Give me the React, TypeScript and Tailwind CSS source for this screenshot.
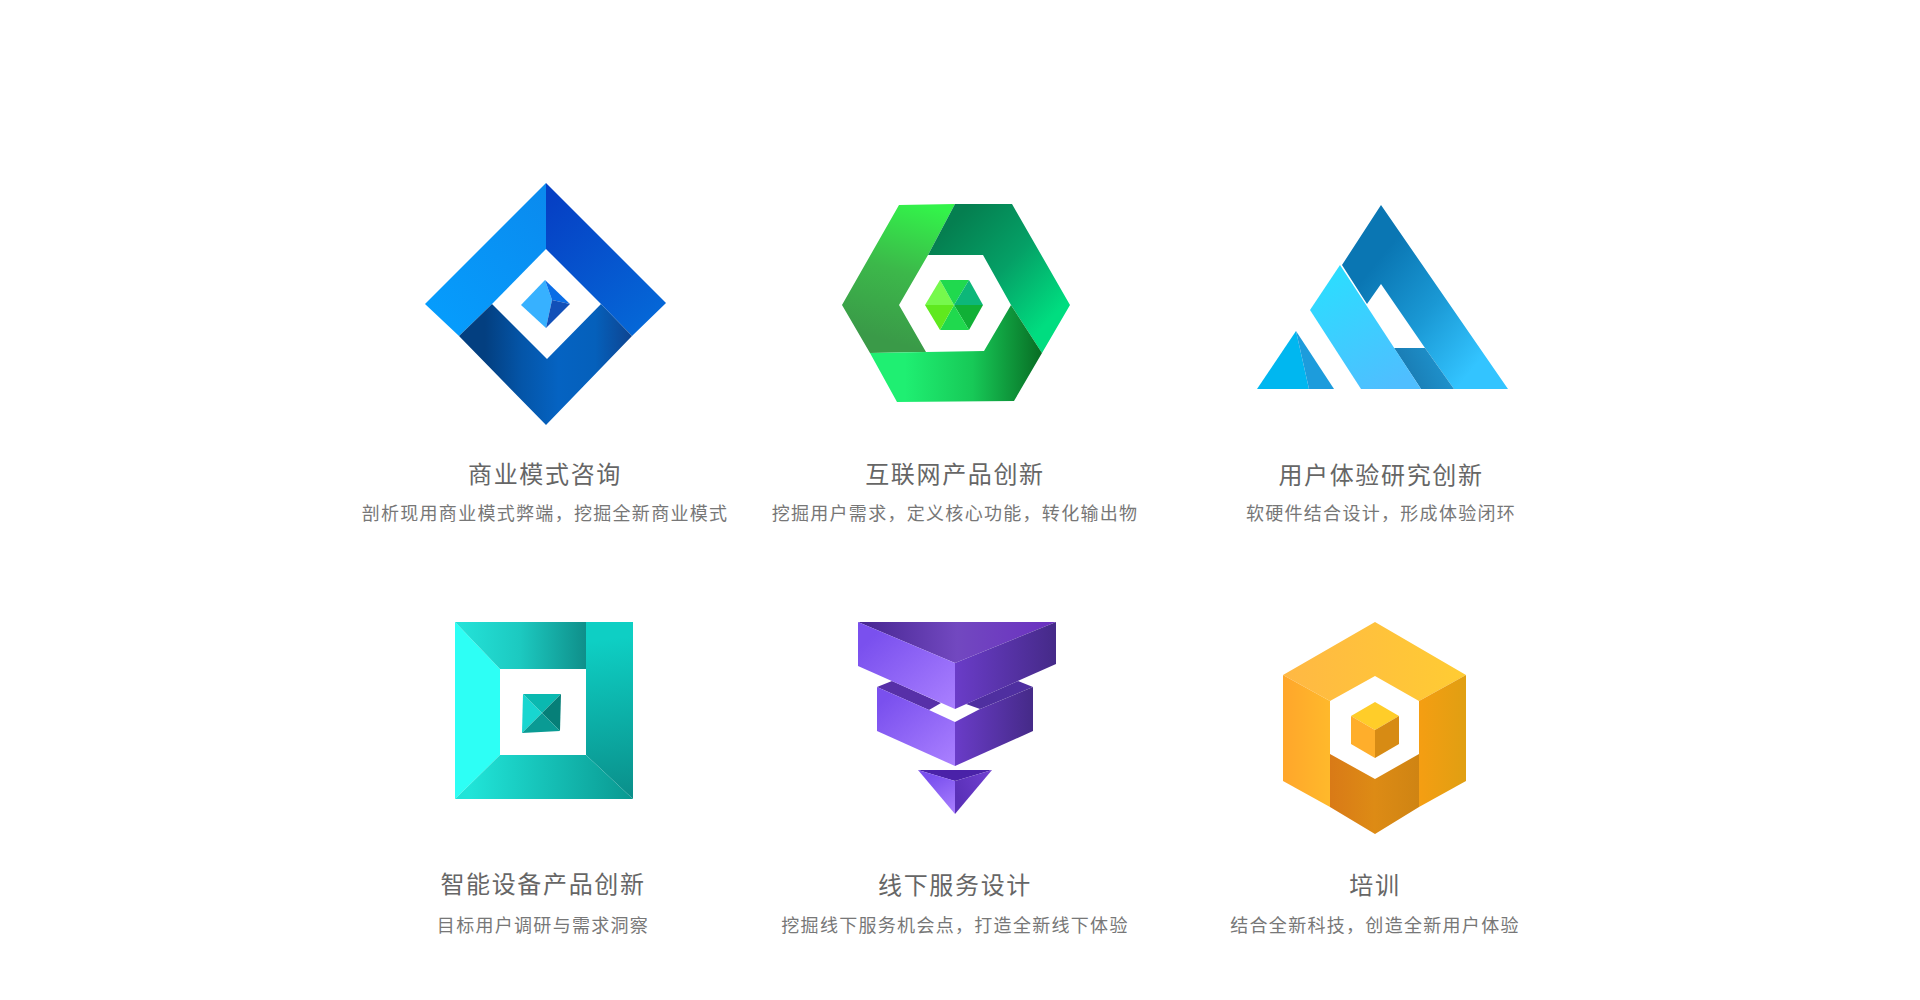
import type { ReactNode } from "react";

const FONT = "font-['Noto_Sans_CJK_SC','Noto_Sans',sans-serif]";

function Grad({ id, x1, y1, x2, y2, stops }: { id: string; x1: number; y1: number; x2: number; y2: number; stops: string[] }) {
  return (
    <linearGradient id={id} gradientUnits="userSpaceOnUse" x1={x1} y1={y1} x2={x2} y2={y2}>
      {stops.map((c, i) => (
        <stop key={i} offset={stops.length === 1 ? 0 : i / (stops.length - 1)} stopColor={c} />
      ))}
    </linearGradient>
  );
}

function DiamondLogo() {
  return (
    <>
      <defs>
        <Grad id="d1" x1={440} y1={320} x2={560} y2={200} stops={["#069cfc", "#0a8aee"]} />
        <Grad id="d2" x1={550} y1={200} x2={650} y2={330} stops={["#0640c4", "#0569d8"]} />
        <Grad id="d3" x1={485} y1={380} x2={632} y2={380} stops={["#033f80", "#0455a8", "#0563c2", "#0560bb", "#0e4490"]} />
      </defs>
      <polygon points="546,183 425,304 459,336 492,304 546,249" fill="url(#d1)" />
      <polygon points="546,183 666,303 632,336 601,304 546,249" fill="url(#d2)" />
      <polygon points="459,336 492,304 547,359 601,304 632,336 546,425" fill="url(#d3)" />
      <polygon points="545,280 521,305 546,328 552,300" fill="#37b1ff" />
      <polygon points="545,280 570,304 552,300" fill="#0a6de6" />
      <polygon points="552,300 570,304 546,328" fill="#1250b8" />
    </>
  );
}

function HexLogo() {
  return (
    <>
      <defs>
        <Grad id="h1" x1={925} y1={205} x2={885} y2={340} stops={["#33f34a", "#3cb84a", "#3a9a48"]} />
        <Grad id="h2" x1={950} y1={225} x2={1050} y2={320} stops={["#057f50", "#05a066", "#00dd80"]} />
        <Grad id="h3" x1={905} y1={380} x2={1040} y2={380} stops={["#1fef72", "#17c957", "#086f25"]} />
      </defs>
      <polygon points="899,205 955,204 928,255 899,305 926,352 870,353 842,305" fill="url(#h1)" />
      <polygon points="955,204 1012,204 1070,305 1042,353 1011,305 983,255 928,255" fill="url(#h2)" />
      <polygon points="870,353 926,352 984,351 1011,305 1042,353 1014,401 897,402" fill="url(#h3)" />
      <polygon points="925,305 940,280 954,305" fill="#76f94c" />
      <polygon points="940,280 969,280 954,305" fill="#20d94e" />
      <polygon points="969,280 983,305 954,305" fill="#0db779" />
      <polygon points="983,305 969,330 954,305" fill="#10b036" />
      <polygon points="969,330 940,330 954,305" fill="#20d94e" />
      <polygon points="940,330 925,305 954,305" fill="#5fe91e" />
    </>
  );
}

function TriangleLogo() {
  return (
    <>
      <defs>
        <Grad id="t1" x1={1370} y1={270} x2={1480} y2={360} stops={["#0a76b3", "#1a98d4", "#33c4ff"]} />
        <Grad id="t2" x1={1335} y1={275} x2={1395} y2={385} stops={["#2ddcff", "#4fbeff"]} />
        <Grad id="t3" x1={1395} y1={375} x2={1450} y2={350} stops={["#1877ae", "#2098d3"]} />
      </defs>
      <polygon points="1381,205 1342,265 1367,304 1381,284 1425,348 1454,389 1508,389" fill="url(#t1)" />
      <polygon points="1394,348 1425,348 1454,389 1421,389" fill="url(#t3)" />
      <polygon points="1340,265 1310,310 1361,389 1421,389" fill="url(#t2)" />
      <polygon points="1296,331 1257,389 1309,389" fill="#00b7f0" />
      <polygon points="1296,331 1309,389 1334,389" fill="#1d9cdc" />
    </>
  );
}

function SquareLogo() {
  return (
    <>
      <defs>
        <Grad id="s1" x1={455} y1={640} x2={586} y2={640} stops={["#24e4da", "#1cc9c0", "#0f8f8a"]} />
        <Grad id="s2" x1={600} y1={640} x2={620} y2={799} stops={["#0ecfc4", "#0a8f8a"]} />
        <Grad id="s3" x1={470} y1={780} x2={630} y2={780} stops={["#20e4d8", "#0a9a92"]} />
      </defs>
      <polygon points="455,622 500,669 500,755 455,799" fill="#2dfff5" />
      <polygon points="455,622 586,622 586,669 500,669" fill="url(#s1)" />
      <polygon points="586,622 633,622 633,799 586,755" fill="url(#s2)" />
      <polygon points="455,799 500,755 586,755 633,799" fill="url(#s3)" />
      <polygon points="523,694 542,713 522,733" fill="#18d6d0" />
      <polygon points="523,694 561,694 542,713" fill="#0ab9b0" />
      <polygon points="561,694 560,731 542,713" fill="#067f78" />
      <polygon points="560,731 522,733 542,713" fill="#0a9b94" />
    </>
  );
}

function FunnelLogo() {
  return (
    <>
      <defs>
        <Grad id="f1" x1={858} y1={640} x2={1056} y2={640} stops={["#452590", "#7248c0", "#6a30c0"]} />
        <Grad id="f2" x1={880} y1={630} x2={950} y2={710} stops={["#7a50ee", "#a97fff"]} />
        <Grad id="f3" x1={955} y1={680} x2={1056} y2={680} stops={["#6a3cc8", "#452a88"]} />
        <Grad id="f4" x1={890} y1={695} x2={950} y2={765} stops={["#7a50ee", "#a97fff"]} />
        <Grad id="f5" x1={955} y1={730} x2={1033} y2={730} stops={["#6a3cc8", "#452a88"]} />
        <Grad id="f6" x1={935} y1={775} x2={955} y2={812} stops={["#7a50ee", "#a97fff"]} />
        <Grad id="f7" x1={955} y1={790} x2={992} y2={775} stops={["#5a30b8", "#7040d0"]} />
      </defs>
      <polygon points="877,687 892,681 941,703 929,710" fill="#5730a8" />
      <polygon points="966,704 1018,681 1033,687 980,709" fill="#4f2fa0" />
      <polygon points="877,687 929,710 955,722 955,766 877,731" fill="url(#f4)" />
      <polygon points="955,722 980,709 1033,687 1033,731 955,766" fill="url(#f5)" />
      <polygon points="858,622 1056,622 955,663" fill="url(#f1)" />
      <polygon points="858,622 955,663 955,709 858,666" fill="url(#f2)" />
      <polygon points="955,663 1056,622 1056,664 955,709" fill="url(#f3)" />
      <polygon points="918,770 992,770 955,781" fill="#4a22a8" />
      <polygon points="918,770 955,781 955,814" fill="url(#f6)" />
      <polygon points="955,781 992,770 955,814" fill="url(#f7)" />
    </>
  );
}

function CubeLogo() {
  return (
    <>
      <defs>
        <Grad id="c1" x1={1283} y1={680} x2={1466} y2={680} stops={["#ffb844", "#ffcc33"]} />
        <Grad id="c2" x1={1283} y1={740} x2={1330} y2={740} stops={["#ffa62b", "#ffb92b"]} />
        <Grad id="c3" x1={1419} y1={740} x2={1466} y2={740} stops={["#f59e12", "#e09f12"]} />
        <Grad id="c4" x1={1330} y1={800} x2={1419} y2={800} stops={["#d97a17", "#dd8b15", "#cf8413"]} />
      </defs>
      <polygon points="1375,622 1466,675 1419,701 1375,676 1330,701 1283,675" fill="url(#c1)" />
      <polygon points="1283,675 1330,701 1330,807 1283,781" fill="url(#c2)" />
      <polygon points="1419,701 1466,675 1466,781 1419,807" fill="url(#c3)" />
      <polygon points="1330,754 1375,779 1419,754 1419,807 1375,834 1330,807" fill="url(#c4)" />
      <polygon points="1375,702 1399,716 1375,730 1351,716" fill="#ffcd29" />
      <polygon points="1351,716 1375,730 1375,758 1351,744" fill="#ffae2b" />
      <polygon points="1399,716 1375,730 1375,758 1399,744" fill="#d78b14" />
    </>
  );
}

function Service({ viewBox, height, title, desc, titleClass, descClass, cellClass, children }: {
  viewBox: string;
  height: string;
  title: string;
  desc: string;
  titleClass: string;
  descClass: string;
  cellClass: string;
  children: ReactNode;
}) {
  return (
    <div className={`flex w-[400px] flex-col items-center ${cellClass}`}>
      <svg viewBox={viewBox} className={`w-[400px] ${height}`}>
        {children}
      </svg>
      <h3 className={`text-[24px] font-normal leading-9 tracking-[1.65px] whitespace-nowrap text-[#666666] ${titleClass}`}>{title}</h3>
      <p className={`text-[18px] leading-7 tracking-[1.3px] whitespace-nowrap text-[#777777] ${descClass}`}>{desc}</p>
    </div>
  );
}

export default function App() {
  return (
    <div className={`h-[1000px] w-[1920px] overflow-hidden bg-white pt-[170px] ${FONT}`}>
      <div className="flex">
        <Service cellClass="ml-[345px]" viewBox="345 170 400 270" height="h-[270px]" title="商业模式咨询" desc="剖析现用商业模式弊端，挖掘全新商业模式" titleClass="mt-[15px]" descClass="mt-[7px]">
          <DiamondLogo />
        </Service>
        <Service cellClass="ml-[10px]" viewBox="755 170 400 270" height="h-[270px]" title="互联网产品创新" desc="挖掘用户需求，定义核心功能，转化输出物" titleClass="mt-[15px]" descClass="mt-[7px]">
          <HexLogo />
        </Service>
        <Service cellClass="ml-[26px]" viewBox="1181 170 400 270" height="h-[270px]" title="用户体验研究创新" desc="软硬件结合设计，形成体验闭环" titleClass="mt-4" descClass="mt-[6px]">
          <TriangleLogo />
        </Service>
      </div>
      <div className="mt-[74px] flex">
        <Service cellClass="ml-[343px]" viewBox="343 600 400 250" height="h-[250px]" title="智能设备产品创新" desc="目标用户调研与需求洞察" titleClass="mt-[15px]" descClass="mt-[9px]">
          <SquareLogo />
        </Service>
        <Service cellClass="ml-[12px]" viewBox="755 600 400 250" height="h-[250px]" title="线下服务设计" desc="挖掘线下服务机会点，打造全新线下体验" titleClass="mt-4" descClass="mt-2">
          <FunnelLogo />
        </Service>
        <Service cellClass="ml-[20px]" viewBox="1175 600 400 250" height="h-[250px]" title="培训" desc="结合全新科技，创造全新用户体验" titleClass="mt-4" descClass="mt-2">
          <CubeLogo />
        </Service>
      </div>
    </div>
  );
}
